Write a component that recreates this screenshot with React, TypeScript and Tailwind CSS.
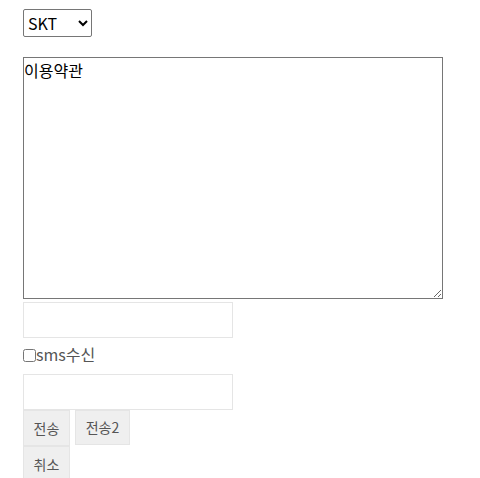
import React from "react";

export default function App() {
  const font = { fontFamily: '"Noto Sans CJK KR", "Noto Sans", sans-serif' };
  return (
    <div className="bg-white w-[480px] h-[478px] overflow-hidden pl-[23px]" style={font}>
      <div className="pt-[9px]">
        <select
          className="w-[69px] h-[28px] border border-[#767676] rounded-[2px] text-[16px] text-black bg-white pl-0"
          style={font}
          defaultValue="SKT"
        >
          <option>SKT</option>
          <option>KT</option>
          <option>LGU+</option>
        </select>
      </div>
      <textarea
        className="block mt-[20px] w-[420px] h-[242px] border border-[#767676] text-[16px] text-black leading-[24px] p-0 resize"
        style={font}
        defaultValue="이용약관"
      />
      <input
        type="text"
        className="block mt-[3px] w-[210px] h-[36px] border border-[#e5e5e5] bg-white"
      />
      <div className="mt-[4px] h-[24px] flex items-center text-[16px] text-[#555]">
        <input type="checkbox" className="w-[13px] h-[13px] m-0 mt-[3px]" />
        <span className="leading-[24px]">sms수신</span>
      </div>
      <input
        type="text"
        className="block mt-[8px] w-[210px] h-[36px] border border-[#e5e5e5] bg-white"
      />
      <div className="flex gap-[5px]">
        <button className="w-[47px] h-[36px] bg-[#efefef] border border-[#e5e5e5] text-[14px] text-[#555]" style={font}>
          전송
        </button>
        <button className="w-[55px] h-[35px] bg-[#efefef] border border-[#e5e5e5] text-[14px] text-[#555]" style={font}>
          전송2
        </button>
      </div>
      <div className="flex">
        <button className="w-[47px] h-[36px] bg-[#efefef] border border-[#e5e5e5] text-[14px] text-[#555]" style={font}>
          취소
        </button>
      </div>
    </div>
  );
}
